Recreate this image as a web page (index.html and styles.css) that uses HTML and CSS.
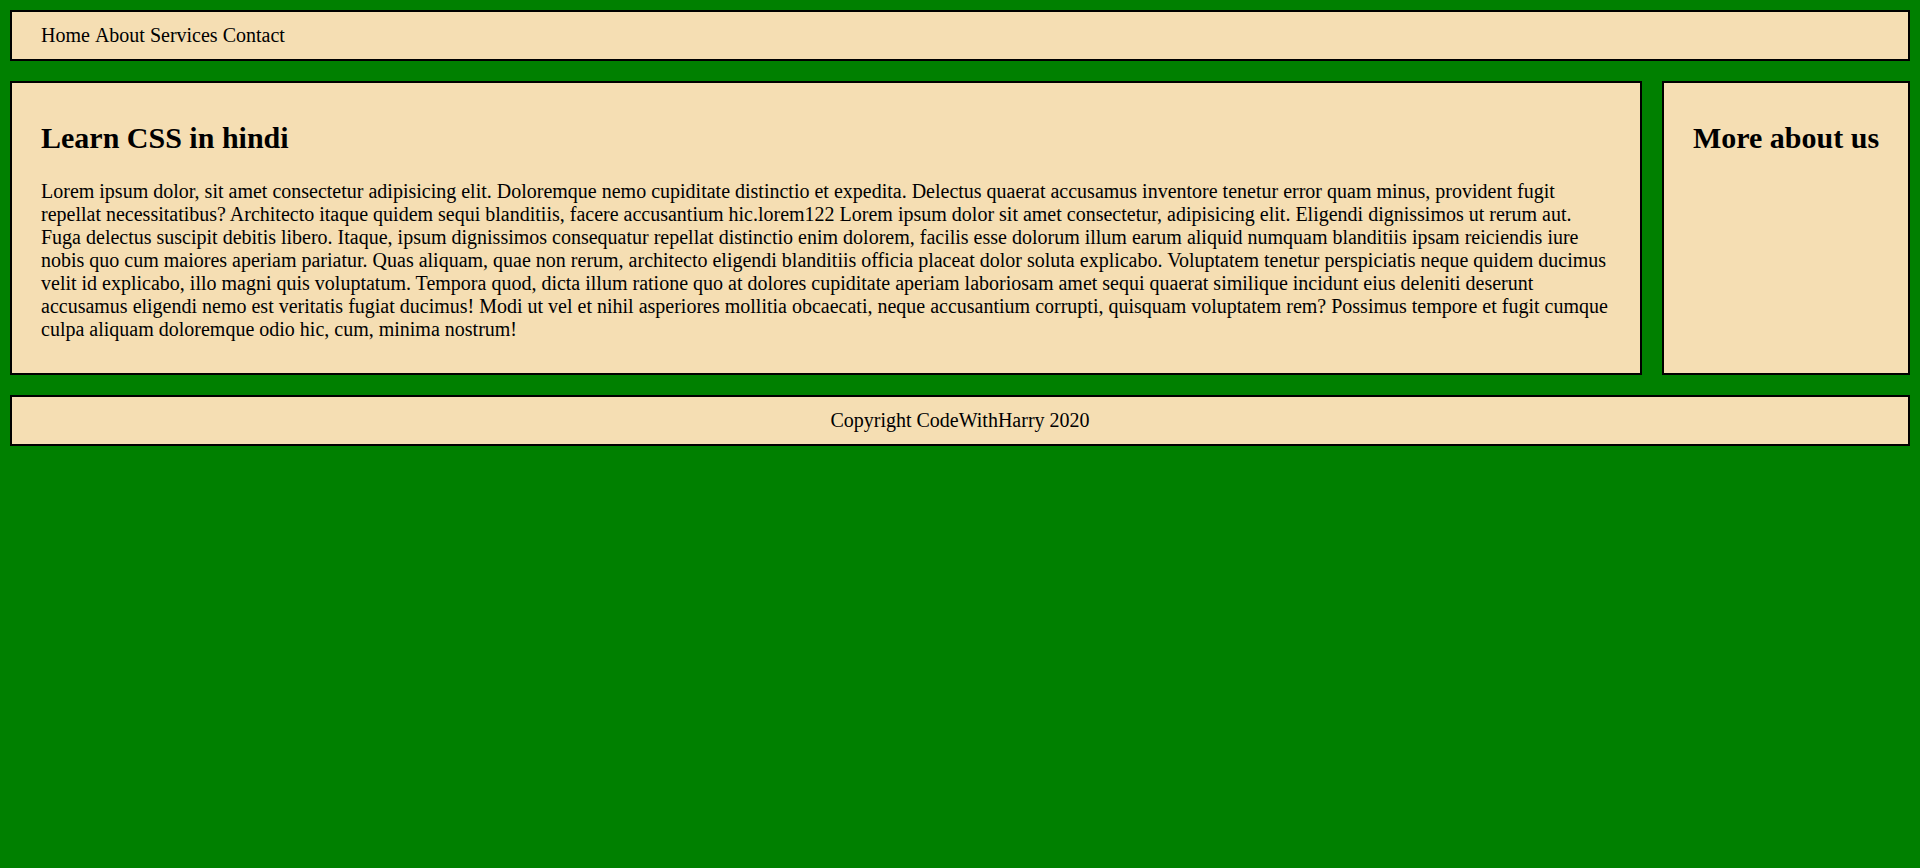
FILE: index.html
```html
<!DOCTYPE html>
<html lang="en">
<head>
<meta charset="UTF-8">
<title>Learn CSS in hindi</title>
<link rel="stylesheet" href="styles.css">
</head>
<body>
<div class="page">
  <nav class="box navbar">
    <ul class="nav-list">
      <li>Home</li>
      <li>About</li>
      <li>Services</li>
      <li>Contact</li>
    </ul>
  </nav>
  <div class="content">
    <section class="box main">
      <h2 class="heading">Learn CSS in hindi</h2>
      <p class="text">Lorem ipsum dolor, sit amet consectetur adipisicing elit. Doloremque nemo cupiditate distinctio et expedita. Delectus quaerat accusamus inventore tenetur error quam minus, provident fugit repellat necessitatibus? Architecto itaque quidem sequi blanditiis, facere accusantium hic.lorem122 Lorem ipsum dolor sit amet consectetur, adipisicing elit. Eligendi dignissimos ut rerum aut. Fuga delectus suscipit debitis libero. Itaque, ipsum dignissimos consequatur repellat distinctio enim dolorem, facilis esse dolorum illum earum aliquid numquam blanditiis ipsam reiciendis iure nobis quo cum maiores aperiam pariatur. Quas aliquam, quae non rerum, architecto eligendi blanditiis officia placeat dolor soluta explicabo. Voluptatem tenetur perspiciatis neque quidem ducimus velit id explicabo, illo magni quis voluptatum. Tempora quod, dicta illum ratione quo at dolores cupiditate aperiam laboriosam amet sequi quaerat similique incidunt eius deleniti deserunt accusamus eligendi nemo est veritatis fugiat ducimus! Modi ut vel et nihil asperiores mollitia obcaecati, neque accusantium corrupti, quisquam voluptatem rem? Possimus tempore et fugit cumque culpa aliquam doloremque odio hic, cum, minima nostrum!</p>
    </section>
    <aside class="box sidebar">
      <h2 class="heading side-heading">More about us</h2>
    </aside>
  </div>
  <footer class="box footer">Copyright CodeWithHarry 2020</footer>
</div>
</body>
</html>
```

FILE: styles.css
```css
html, body {
  margin: 0;
  padding: 0;
}

body {
  background: #008000;
  font-family: "Liberation Serif", "Times New Roman", serif;
  font-size: 20px;
  color: #000;
}

.page {
  padding: 10px;
  display: flex;
  flex-direction: column;
  gap: 20px;
}

.box {
  background: #f5deb3;
  border: 2px solid #000;
  padding: 12.5px 29px;
}

.navbar {
  padding-top: 12px;
  padding-bottom: 12px;
}

.nav-list {
  list-style: none;
  margin: 0;
  padding: 0;
  line-height: 23px;
}

.nav-list li {
  display: inline;
}

.content {
  display: flex;
  gap: 20px;
  align-items: stretch;
}

.main {
  flex: 1 1 auto;
}

.sidebar {
  flex: 0 0 248px;
  box-sizing: border-box;
  text-align: center;
  padding-left: 10px;
  padding-right: 10px;
}

.heading {
  font-size: 30px;
  font-weight: bold;
  margin: 25px 0;
  line-height: 34px;
}

.side-heading {
  white-space: nowrap;
}

.text {
  margin: 20px 0;
  line-height: 23px;
}

.footer {
  text-align: center;
  line-height: 23px;
  padding-top: 12px;
  padding-bottom: 12px;
}
```
